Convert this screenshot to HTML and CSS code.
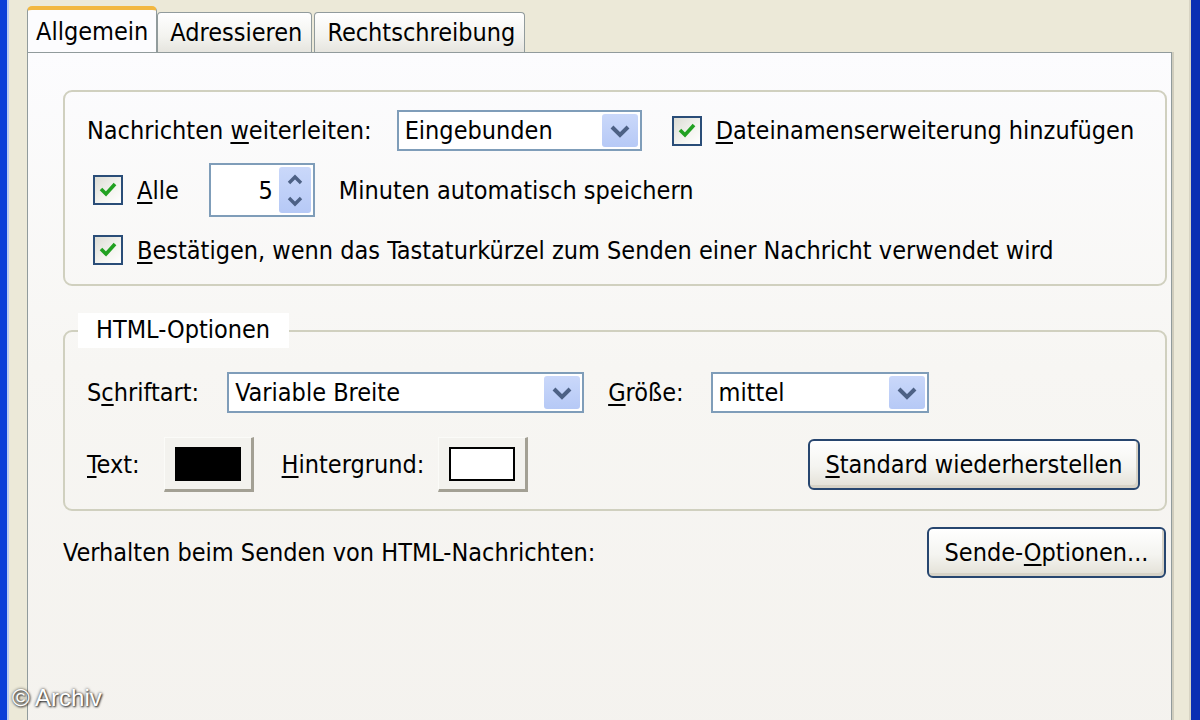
FILE: index.html
```html
<!DOCTYPE html>
<html lang="de">
<head>
  <meta charset="UTF-8">
  <title>Optionen - Verfassen</title>
  <link rel="stylesheet" href="styles.css">
</head>
<body>
  <div class="window">
    <div class="tabs">
      <div class="tab active">Allgemein</div>
      <div class="tab">Adressieren</div>
      <div class="tab">Rechtschreibung</div>
    </div>

    <div class="panel">
      <div class="group">
        <div class="row row-forward">
          <span class="label">Nachrichten <u>w</u>eiterleiten:</span>
          <div class="select select-forward">
            <span class="select-value">Eingebunden</span>
            <span class="drop-btn">
              <svg width="22" height="14" viewBox="0 0 22 14"><path d="M3 3 L11 11 L19 3" fill="none" stroke="#4d6185" stroke-width="4"/></svg>
            </span>
          </div>
          <div class="check">
            <span class="box"><svg width="22" height="22" viewBox="0 0 22 22"><path d="M4 10 L9 15 L18 5" fill="none" stroke="#21a121" stroke-width="3.6"/></svg></span>
            <span><u>D</u>ateinamenserweiterung hinzufügen</span>
          </div>
        </div>

        <div class="row row-autosave">
          <div class="check">
            <span class="box"><svg width="22" height="22" viewBox="0 0 22 22"><path d="M4 10 L9 15 L18 5" fill="none" stroke="#21a121" stroke-width="3.6"/></svg></span>
            <span><u>A</u>lle</span>
          </div>
          <div class="spin">
            <span class="spin-value">5</span>
            <span class="spin-btns">
              <svg width="18" height="12" viewBox="0 0 18 12"><path d="M3 10 L9 4 L15 10" fill="none" stroke="#4d6185" stroke-width="3.4"/></svg>
              <svg width="18" height="12" viewBox="0 0 18 12"><path d="M3 2 L9 8 L15 2" fill="none" stroke="#4d6185" stroke-width="3.4"/></svg>
            </span>
          </div>
          <span class="label">Minuten automatisch speichern</span>
        </div>

        <div class="row row-confirm">
          <div class="check">
            <span class="box"><svg width="22" height="22" viewBox="0 0 22 22"><path d="M4 10 L9 15 L18 5" fill="none" stroke="#21a121" stroke-width="3.6"/></svg></span>
            <span><u>B</u>estätigen, wenn das Tastaturkürzel zum Senden einer Nachricht verwendet wird</span>
          </div>
        </div>
      </div>

      <fieldset class="group group-html">
        <legend>HTML-Optionen</legend>

        <div class="row row-font">
          <span class="label">S<u>c</u>hriftart:</span>
          <div class="select select-font">
            <span class="select-value">Variable Breite</span>
            <span class="drop-btn">
              <svg width="22" height="14" viewBox="0 0 22 14"><path d="M3 3 L11 11 L19 3" fill="none" stroke="#4d6185" stroke-width="4"/></svg>
            </span>
          </div>
          <span class="label"><u>G</u>röße:</span>
          <div class="select select-size">
            <span class="select-value">mittel</span>
            <span class="drop-btn">
              <svg width="22" height="14" viewBox="0 0 22 14"><path d="M3 3 L11 11 L19 3" fill="none" stroke="#4d6185" stroke-width="4"/></svg>
            </span>
          </div>
        </div>

        <div class="row row-colors">
          <span class="label"><u>T</u>ext:</span>
          <div class="color-btn color-text"><span class="swatch swatch-black"></span></div>
          <span class="label label-bg"><u>H</u>intergrund:</span>
          <div class="color-btn color-bg"><span class="swatch swatch-white"></span></div>
          <button class="xp-btn btn-reset"><u>S</u>tandard wiederherstellen</button>
        </div>
      </fieldset>

      <div class="row row-send">
        <span class="label">Verhalten beim Senden von HTML-Nachrichten:</span>
        <button class="xp-btn btn-send">Sende-<u>O</u>ptionen...</button>
      </div>
    </div>

    <div class="watermark">© Archiv</div>
  </div>
</body>
</html>
```

FILE: styles.css
```css
body {
  margin: 0;
  font-family: 'DejaVu Sans Condensed', 'DejaVu Sans', sans-serif;
  font-size: 25px;
  color: #000;
  background: #ece9d8;
}

u {
  text-decoration-thickness: 2px;
  text-underline-offset: 3px;
}

.window {
  position: relative;
  width: 1200px;
  height: 720px;
  box-sizing: border-box;
  padding: 6px 19px 0 20px;
  background: #ece9d8;
  border-left: 7px solid #0a3fd8;
  border-right: 9px solid #0b2fb3;
  box-shadow: inset 2px 0 #b9cdf2, inset -2px 0 #d8d4c4;
  overflow: hidden;
}

/* tabs */

.tabs {
  display: flex;
  align-items: flex-end;
  height: 46px;
}

.tab {
  height: 40px;
  box-sizing: border-box;
  padding: 0 9px 0 12px;
  display: flex;
  align-items: center;
  border: 1px solid #919b9c;
  border-bottom: none;
  border-radius: 4px 4px 0 0;
  background: linear-gradient(#ffffff, #f3f3ef 60%, #e6e5df);
  margin-right: 2px;
}

.tab.active {
  height: 46px;
  padding: 0 8px;
  margin-right: 0;
  border-top: 4px solid #f2b740;
  border-radius: 5px 5px 0 0;
  background: #fcfcfe;
}

/* panel */

.panel {
  height: 700px;
  border: 1px solid #919b9c;
  border-bottom: none;
  box-sizing: border-box;
  padding: 37px 4px 0 35px;
  background: linear-gradient(#fcfcfe, #f7f6f3 45%, #f4f2ee);
  box-shadow: 2px 0 0 #d0cdbd;
}

.group {
  border: 2px solid #d0d0bf;
  border-radius: 9px;
  padding: 18px 22px 19px 22px;
  margin: 0;
}

.row {
  display: flex;
  align-items: center;
}

.row-forward {
  height: 41px;
}

.row-forward .select-forward {
  margin-left: 25px;
}

.row-forward .check {
  margin-left: 30px;
}

.row-autosave {
  height: 54px;
  margin-top: 12px;
  padding-left: 6px;
}

.row-autosave .spin {
  margin-left: 30px;
  margin-right: 24px;
}

.row-confirm {
  height: 30px;
  margin-top: 18px;
  padding-left: 6px;
}

.label {
  white-space: nowrap;
}

/* checkbox */

.check {
  display: flex;
  align-items: center;
  gap: 14px;
  white-space: nowrap;
}

.box {
  width: 30px;
  height: 30px;
  box-sizing: border-box;
  border: 2px solid #2a4d78;
  background: linear-gradient(135deg, #dcdcd5, #f4f4f0 60%, #ffffff);
  display: flex;
  align-items: center;
  justify-content: center;
}

/* combo boxes */

.select {
  height: 41px;
  box-sizing: border-box;
  border: 2px solid #7f9db9;
  background: #fff;
  display: flex;
  align-items: center;
}

.select-value {
  flex-grow: 1;
  padding-left: 6px;
  white-space: nowrap;
}

.drop-btn {
  width: 36px;
  align-self: stretch;
  margin: 2px;
  border-radius: 3px;
  background: linear-gradient(#cad8fa, #b6c9f6);
  display: flex;
  align-items: center;
  justify-content: center;
}

.select-forward {
  width: 245px;
}

.select-font {
  width: 357px;
  margin: 0 24px 0 28px;
}

.select-size {
  width: 218px;
  margin-left: 27px;
}

/* spinner */

.spin {
  width: 106px;
  height: 54px;
  box-sizing: border-box;
  border: 2px solid #7f9db9;
  background: #fff;
  display: flex;
  align-items: center;
}

.spin-value {
  flex-grow: 1;
  text-align: right;
  padding-right: 6px;
}

.spin-btns {
  width: 32px;
  align-self: stretch;
  margin: 2px 2px 2px 0;
  border-radius: 3px;
  background: linear-gradient(#cad8fa, #b6c9f6);
  display: flex;
  flex-direction: column;
  align-items: center;
  justify-content: space-around;
}

/* html options */

.group-html {
  margin-top: 27px;
  padding-top: 24px;
  padding-bottom: 17px;
}

.group-html legend {
  padding: 2px 19px 4px 18px;
  margin-left: -9px;
  background: #fff;
}

.row-font {
  height: 41px;
}

.row-colors {
  height: 55px;
  margin-top: 24px;
}

.color-text {
  margin-left: 24px;
}

.color-bg {
  margin-left: 14px;
}

.label-bg {
  margin-left: 28px;
}

.color-btn {
  width: 90px;
  height: 55px;
  box-sizing: border-box;
  padding-left: 10px;
  background: #f3f2ee;
  border-top: 1px solid #fbfbf8;
  border-left: 1px solid #fbfbf8;
  border-right: 3px solid #a3a094;
  border-bottom: 3px solid #a3a094;
  display: flex;
  align-items: center;
}

.swatch {
  width: 66px;
  height: 34px;
  box-sizing: border-box;
  border: 2px solid #000;
}

.swatch-black {
  background: #000;
}

.swatch-white {
  background: #fff;
}

/* push buttons */

.xp-btn {
  font-family: inherit;
  font-size: inherit;
  color: #000;
  height: 51px;
  box-sizing: border-box;
  border: 2px solid #27466f;
  border-radius: 6px;
  background: linear-gradient(#ffffff, #f4f4f0 55%, #e3e0d6);
  box-shadow: inset -2px -3px 0 #d7d3c7;
  padding: 0 8px;
  white-space: nowrap;
}

.btn-reset {
  width: 332px;
  margin-left: auto;
  margin-right: 3px;
}

.row-send {
  height: 51px;
  margin-top: 16px;
  justify-content: space-between;
}

.btn-send {
  width: 239px;
  margin-right: 1px;
}

.watermark {
  position: absolute;
  left: 5px;
  bottom: 8px;
  font-family: 'Liberation Sans', Arial, sans-serif;
  font-size: 24px;
  color: #fff;
  text-shadow: 0 0 3px #333, 1px 1px 2px #333;
}
```
